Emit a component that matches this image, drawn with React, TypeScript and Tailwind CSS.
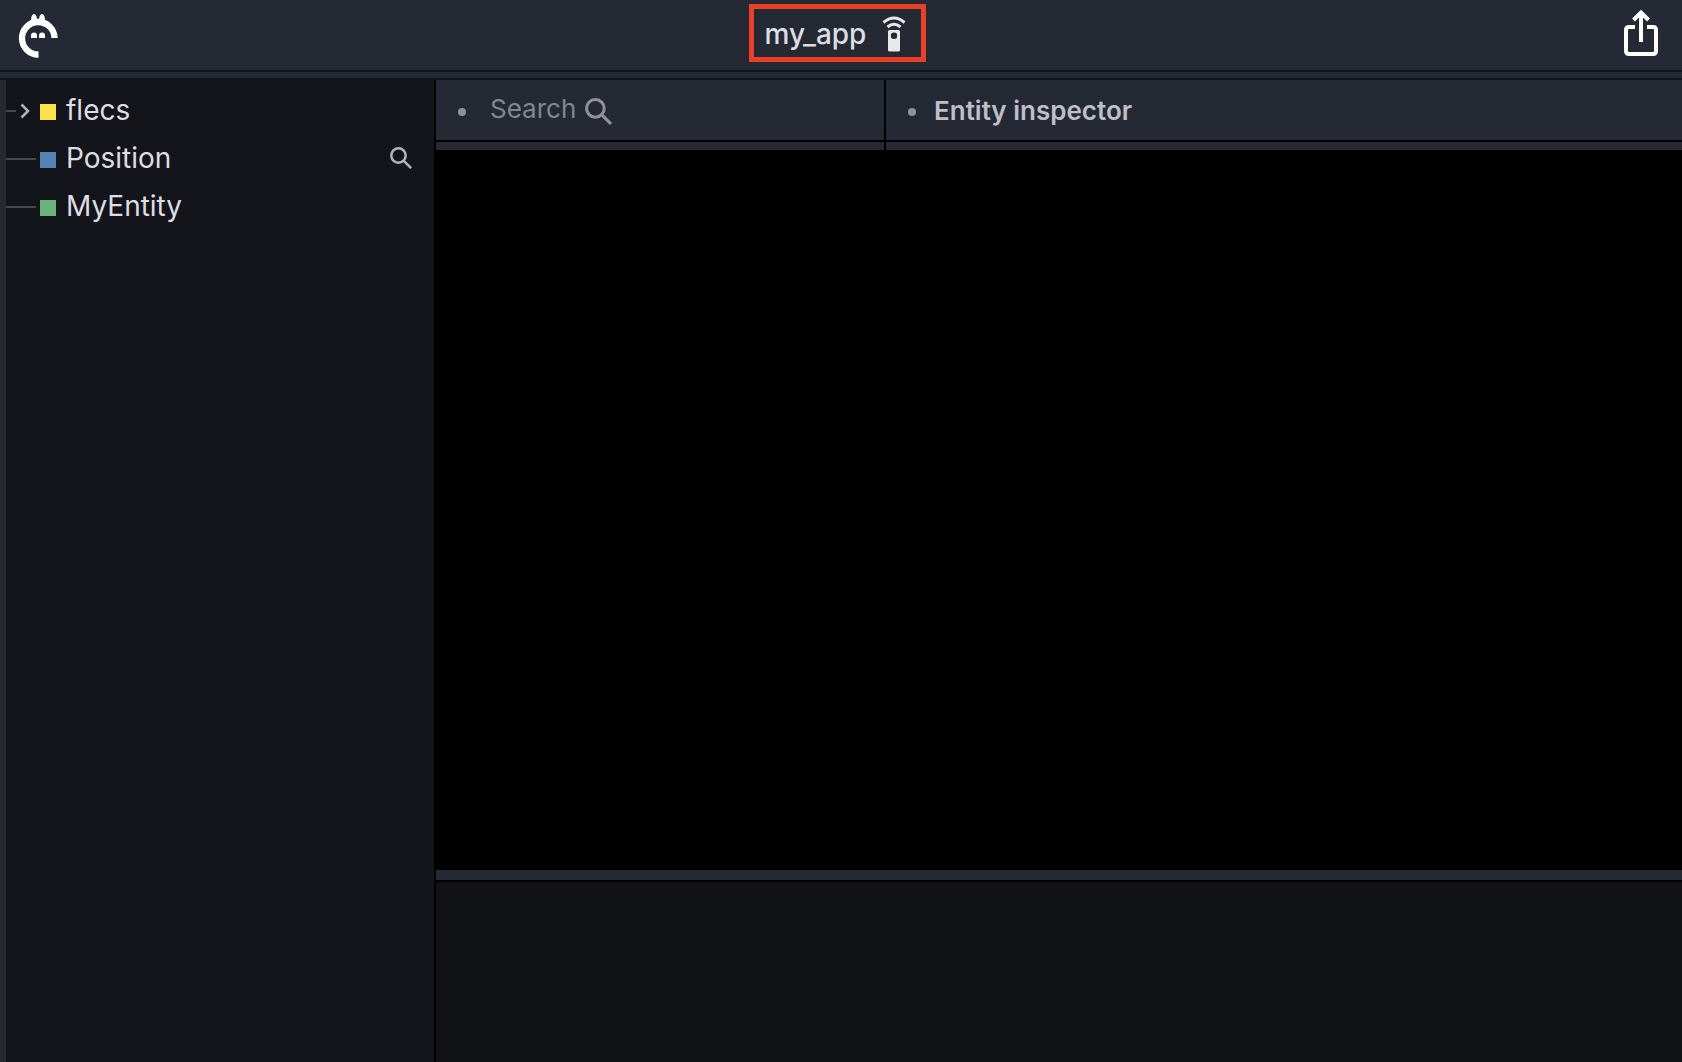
import React from "react";

function Logo() {
  return (
    <svg width="44" height="48" viewBox="0 0 44 48" aria-hidden="true">
      <path d="M22.500 42.500A16.250 16.250 0 1 1 38.500 26" fill="none" stroke="#fff" strokeWidth="6.300" />
      <path d="M14.500 11 15.500 4.500q.5-2.500 2.500-2.500t2.500 2.500L21 7h2l.5-2.500q.5-2.500 2.500-2.500t2.500 2.500L29.500 11Z" fill="#fff" />
      <path d="M15 26v-2.500a3 3 0 0 1 6 0V26ZM23 26v-2.500a3 3 0 0 1 6 0V26Z" fill="#fff" />
    </svg>
  );
}

function RemoteIcon() {
  return (
    <svg width="24" height="36" viewBox="0 0 24 36" role="img" aria-label="Remote connection">
      <path d="M1.500 6.500Q12-2.500 22.500 6.500M5.500 11Q12 5.500 18.500 11" fill="none" stroke="#e9e9eb" strokeWidth="3" />
      <path
        fillRule="evenodd"
        d="M7.500 14h9q1.500 0 1.500 1.500V34q0 1.500-1.500 1.500h-9Q6 35.500 6 34V15.500Q6 14 7.500 14ZM12 16.500a3.200 3.200 0 1 0 0 6.400a3.200 3.200 0 1 0 0-6.400Z"
        fill="#e9e9eb"
      />
    </svg>
  );
}

function ShareIcon() {
  return (
    <svg width="36" height="48" viewBox="0 0 36 48" fill="none" stroke="#fff" strokeWidth="4" aria-hidden="true">
      <path d="M12 18H6q-3 0-3 3v21q0 3 3 3h24q3 0 3-3V21q0-3-3-3h-6" />
      <path d="M18 33V4M10.500 11 18 3.500 25.500 11" />
    </svg>
  );
}

function SearchIcon({ className, thickness }: { className: string; thickness: number }) {
  return (
    <svg viewBox="0 0 26 26" fill="none" stroke="currentColor" strokeWidth={thickness} className={className} aria-hidden="true">
      <circle cx="10" cy="10" r="8.500" />
      <path d="M16 16 25 25" />
    </svg>
  );
}

function Dot() {
  return <span className="mt-1 size-2 shrink-0 rounded-full bg-[#919196]" />;
}

type Entity = { name: string; color: string; expandable?: boolean; searchable?: boolean };

const entities: Entity[] = [
  { name: "flecs", color: "bg-[#fbe14b]", expandable: true },
  { name: "Position", color: "bg-[#5682b5]", searchable: true },
  { name: "MyEntity", color: "bg-[#68b37c]" },
];

function EntityRow({ entity }: { entity: Entity }) {
  return (
    <li className="flex h-12 items-center pr-[22px]">
      <span className={`mt-0.5 h-0.5 bg-[#47484c] ${entity.expandable ? "w-2.5" : "w-[30px]"}`} />
      {entity.expandable && (
        <button aria-label={`Expand ${entity.name}`} className="mt-0.5 flex w-5 pl-1">
          <svg width="10" height="16" viewBox="0 0 10 16" fill="none" stroke="#b4b4b7" strokeWidth="2.500">
            <path d="M1.500 1.500 8 8 1.500 14.500" />
          </svg>
        </button>
      )}
      <span className={`mt-1 ml-1 size-4 ${entity.color}`} />
      <button className="ml-2.5 text-[28px] leading-9">{entity.name}</button>
      {entity.searchable && (
        <button aria-label={`Query ${entity.name}`} className="ml-auto text-[#b4b4b7]">
          <SearchIcon className="size-[22px]" thickness={3} />
        </button>
      )}
    </li>
  );
}

export default function App() {
  return (
    <div className="flex h-screen flex-col overflow-hidden bg-[#242933] font-['Inter',sans-serif] text-[#dddee4]">
      <header className="grid h-[72px] shrink-0 grid-cols-[1fr_auto_1fr] items-start border-b-2 border-[#14151a]">
        <button aria-label="Menu" className="mt-3 ml-4 w-fit">
          <Logo />
        </button>
        <div className="mt-1 ml-[-7px] flex h-[58px] items-center gap-4 border-5 border-[#eb4025] pt-0.5 pr-[15px] pl-[11px]">
          <h1 className="text-[28px] leading-9 font-medium">my_app</h1>
          <RemoteIcon />
        </div>
        <button aria-label="Share" className="mt-[9px] mr-[23px] justify-self-end">
          <ShareIcon />
        </button>
      </header>
      <div className="h-2 shrink-0 border-b-2 border-[#14151a]" />
      <div className="flex min-h-0 flex-1 pl-1.5">
        <nav aria-label="Entities" className="w-[430px] shrink-0 border-r-2 border-black bg-[#14151a] pt-1.5">
          <ul>
            {entities.map((e) => (
              <EntityRow key={e.name} entity={e} />
            ))}
          </ul>
        </nav>
        <main className="flex min-w-0 flex-1 flex-col">
          <div className="flex h-[70px] shrink-0">
            <div className="flex w-[450px] flex-col border-r-2 border-black">
              <label className="flex h-[62px] items-center border-b-2 border-black pl-[22px]">
                <Dot />
                <input
                  type="text"
                  placeholder="Search"
                  aria-label="Search"
                  className="-mt-0.5 ml-6 w-[87px] bg-transparent text-[26px] leading-9 outline-none placeholder:text-[#85868c] placeholder:opacity-100"
                />
                <SearchIcon className="mt-0.5 ml-2 size-[27px] text-[#919196]" thickness={3} />
              </label>
            </div>
            <div className="flex-1">
              <div className="flex h-[62px] items-center border-b-2 border-black pl-[22px]">
                <Dot />
                <h2 className="mt-0.5 ml-[18px] text-[26px] leading-9 font-semibold text-[#bebfcb]">Entity inspector</h2>
              </div>
            </div>
          </div>
          <section aria-label="Viewport" className="flex-1 bg-black" />
          <div className="h-3 shrink-0 border-b-2 border-black" />
          <section aria-label="Details" className="h-[180px] shrink-0 bg-[#111215]" />
        </main>
      </div>
    </div>
  );
}
